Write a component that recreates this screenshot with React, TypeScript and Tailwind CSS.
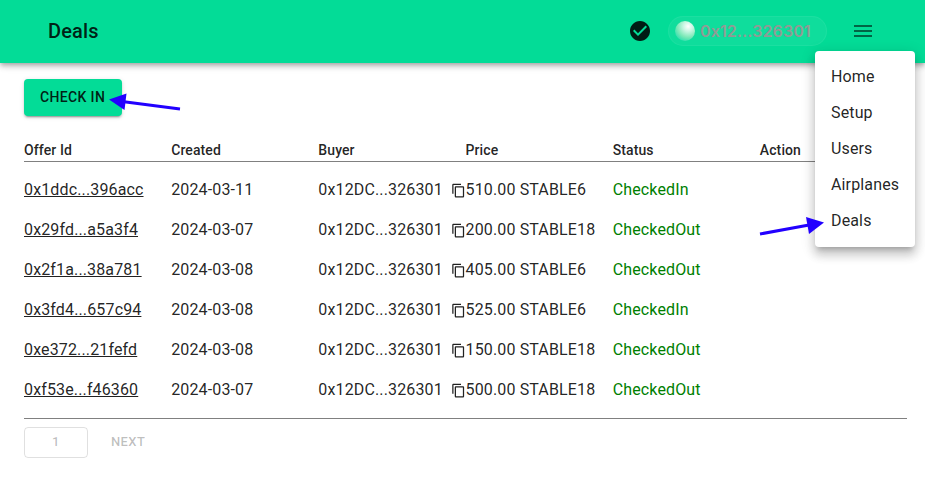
import React from "react";

const deals = [
  { id: "0x1ddc...396acc", created: "2024-03-11", price: "510.00 STABLE6", status: "CheckedIn" },
  { id: "0x29fd...a5a3f4", created: "2024-03-07", price: "200.00 STABLE18", status: "CheckedOut" },
  { id: "0x2f1a...38a781", created: "2024-03-08", price: "405.00 STABLE6", status: "CheckedOut" },
  { id: "0x3fd4...657c94", created: "2024-03-08", price: "525.00 STABLE6", status: "CheckedIn" },
  { id: "0xe372...21fefd", created: "2024-03-08", price: "150.00 STABLE18", status: "CheckedOut" },
  { id: "0xf53e...f46360", created: "2024-03-07", price: "500.00 STABLE18", status: "CheckedOut" },
];

const columns = ["Offer Id", "Created", "Buyer", "Price", "Status", "Action"];
const menuItems = ["Home", "Setup", "Users", "Airplanes", "Deals"];

function CheckBadge() {
  return (
    <svg viewBox="0 0 24 24" className="size-6 fill-black/87">
      <path d="M12 2C6.48 2 2 6.48 2 12s4.48 10 10 10 10-4.48 10-10S17.52 2 12 2zm-2 15-5-5 1.41-1.41L10 14.17l7.59-7.59L19 8l-9 9z" />
    </svg>
  );
}

function MenuIcon() {
  return (
    <svg viewBox="0 0 24 24" className="size-6 fill-black/54">
      <path d="M3 18h18v-2H3v2zm0-5h18v-2H3v2zm0-7v2h18V6H3z" />
    </svg>
  );
}

function CopyIcon() {
  return (
    <svg viewBox="0 0 24 24" className="mt-px ml-2 size-[15px] shrink-0 fill-black/87">
      <path d="M16 1H4c-1.1 0-2 .9-2 2v14h2V3h12V1zm3 4H8c-1.1 0-2 .9-2 2v14c0 1.1.9 2 2 2h11c1.1 0 2-.9 2-2V7c0-1.1-.9-2-2-2zm0 16H8V7h11v14z" />
    </svg>
  );
}

function Header() {
  return (
    <header className="flex h-[63px] items-center bg-[#03dc97] pr-[50px] pb-px pl-12 shadow-[0px_2px_4px_-1px_rgba(0,0,0,0.2),0px_4px_5px_0px_rgba(0,0,0,0.14),0px_1px_10px_0px_rgba(0,0,0,0.12)]">
      <h1 className="grow text-xl font-medium tracking-[0.15px]">Deals</h1>
      <CheckBadge />
      <div className="ml-4 flex h-[30px] w-[159px] items-center rounded-full border border-white/5 bg-white/5 pl-1.5">
        <span className="size-5 shrink-0 rounded-full bg-[radial-gradient(circle_at_66%_27%,#fff_0%,#c9f6e3_25%,#7de9b8_55%,#12dbab_90%)]" />
        <span className="ml-[5px] font-['Inter',sans-serif] text-base font-semibold tracking-[0.12px] text-[#8f9b95]">0x12...326301</span>
      </div>
      <div className="ml-6">
        <MenuIcon />
      </div>
    </header>
  );
}

function NavMenu() {
  return (
    <nav className="absolute top-[51px] left-[815px] h-[196px] w-[100px] rounded bg-white py-2 shadow-[0px_5px_5px_-3px_rgba(0,0,0,0.2),0px_8px_10px_1px_rgba(0,0,0,0.14),0px_3px_14px_2px_rgba(0,0,0,0.12)]">
      {menuItems.map((item) => (
        <div key={item} className="flex h-9 items-center px-4">{item}</div>
      ))}
    </nav>
  );
}

export default function App() {
  return (
    <div className="relative h-[481px] w-[925px] overflow-hidden bg-white font-['Roboto',sans-serif] text-base tracking-[0.14px] text-black/87">
      <Header />
      <main className="pt-4 pr-[18px] pl-6">
        <button className="flex h-[37px] w-[98px] items-center rounded bg-[#03dc97] pl-4 text-sm font-medium tracking-[0.36px] shadow-[0px_3px_1px_-2px_rgba(0,0,0,0.2),0px_2px_2px_0px_rgba(0,0,0,0.14),0px_1px_5px_0px_rgba(0,0,0,0.12)]">
          <span className="-mt-px">CHECK IN</span>
        </button>
        <div className="mt-[23px] grid h-[23px] grid-cols-6 border-b border-[#808080] text-sm/[22px] font-medium tracking-[0.1px]">
          {columns.map((name) => (
            <span key={name}>{name}</span>
          ))}
        </div>
        <div className="border-b border-[#808080] pt-2 pb-2">
          {deals.map((deal) => (
            <div key={deal.id} className="grid h-10 grid-cols-6 items-center whitespace-nowrap">
              <a className="underline">{deal.id}</a>
              <span>{deal.created}</span>
              <span className="flex items-center">
                0x12DC...326301
                <CopyIcon />
              </span>
              <span>{deal.price}</span>
              <span className="text-[#008000]">{deal.status}</span>
            </div>
          ))}
        </div>
        <div className="mt-2 flex items-center text-[13px] font-medium tracking-[0.4px] text-black/26">
          <button className="h-[31px] w-16 rounded border border-black/12 pb-0.5">1</button>
          <button className="ml-[23px] pb-0.5">NEXT</button>
        </div>
      </main>
      <NavMenu />
      <svg className="pointer-events-none absolute inset-0 size-full fill-[#2200ff] stroke-[#2200ff]">
        <path d="M180 109 124 101.8" strokeWidth="3" />
        <path d="m109 99.500 17.500-6-2 16.500z" stroke="none" />
        <path d="m760 234 49-9" strokeWidth="3" />
        <path d="m824 222.500-18-5.500 3 17z" stroke="none" />
      </svg>
    </div>
  );
}
